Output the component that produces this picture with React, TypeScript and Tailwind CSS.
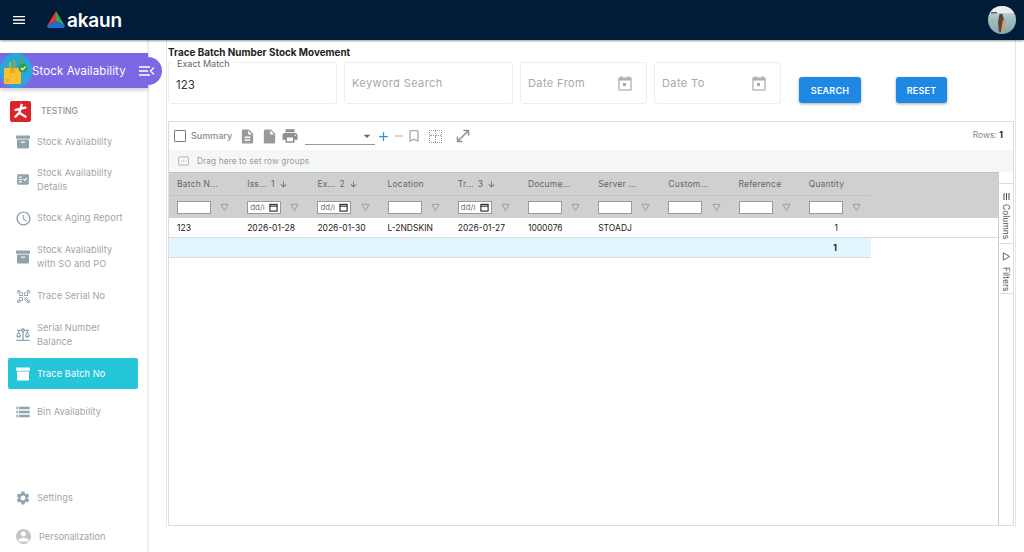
import { ReactNode } from 'react';
import {
  MdMenu,
  MdAccessTime,
  MdFactCheck,
  MdStorage,
  MdSettings,
  MdDescription,
  MdInsertDriveFile,
  MdPrint,
  MdBookmarkBorder,
  MdArrowDropDown,
  MdAdd,
  MdRemove,
  MdArrowDownward,
  MdOutlineQrCodeScanner,
  MdOutlineBalance,
  MdPerson,
} from 'react-icons/md';

const font = "font-['Inter',sans-serif]";

function BoxIcon({ className }: { className?: string }) {
  return (
    <svg viewBox="0 0 14 14" className={className} fill="currentColor">
      <rect x="0" y="0.5" width="14" height="3.2" rx="0.6" />
      <path d="M1 4.6h12v8a1 1 0 0 1-1 1H2a1 1 0 0 1-1-1z" />
      <rect x="5" y="6.6" width="4" height="1.2" fill="white" />
    </svg>
  );
}

function CalendarIcon() {
  return (
    <svg viewBox="0 0 14 15" className="w-[14px] h-[15px]" fill="none" stroke="#aaaaaa">
      <path d="M3.500 0v3M10.500 0v3" strokeWidth="1.200" />
      <rect x="1" y="2" width="12" height="12" strokeWidth="1.200" />
      <path d="M1 3.500h12" strokeWidth="2" />
      <rect x="5" y="7" width="3" height="3" fill="#aaaaaa" stroke="none" />
    </svg>
  );
}

function Logo() {
  return (
    <svg viewBox="0 0 18 18" className="w-[18px] h-[18px]">
      <path d="M9 0 L9 10 L0 15z" fill="#e5392f" />
      <path d="M9 0 L18 15 L9 10z" fill="#3aa655" />
      <path d="M9 10 L18 15 L17 17 L1 17 L0 15z" fill="#1f6fd6" />
    </svg>
  );
}

function ModuleIcon() {
  return (
    <div className="w-[32px] h-[35px] rounded-full bg-[#2aa5de] flex items-center justify-center relative shrink-0">
      <svg viewBox="0 0 32 34" className="w-[32px] h-[34px]">
        <rect x="9" y="8" width="2.5" height="6" fill="#8bc34a" />
        <rect x="13" y="6" width="2.5" height="8" fill="#7cb342" />
        <rect x="19" y="3" width="2.500" height="11" fill="#4caf50" />
        <rect x="4" y="14" width="17" height="16" rx="1" fill="#fbc02d" />
        <rect x="10" y="14" width="5" height="5" fill="#f59e2a" />
        <rect x="6" y="25" width="3" height="2.500" fill="#f59e2a" />
        <circle cx="23" cy="14" r="4.500" fill="#2e9e4f" />
        <path d="M21 14l1.600 1.600 3-3" stroke="white" strokeWidth="1.100" fill="none" />
      </svg>
    </div>
  );
}

function NavItem({ icon, label, lines, active }: { icon: ReactNode; label: string; lines?: string; active?: boolean }) {
  return (
    <div
      className={`flex items-center gap-[7px] pl-[8px] w-[130px] rounded-[2px] ml-[8px] ${
        active ? 'bg-[#26c6da] text-white h-[31px]' : 'text-[#a0a5ab]'
      }`}
    >
      <div className={`w-[14px] h-[14px] shrink-0 flex items-center justify-center ${active ? 'text-white' : 'text-[#90a4ae]'}`}>
        {icon}
      </div>
      <div className="text-[9.2px] leading-[13.5px] tracking-[0.1px]">
        {label}
        {lines && <div>{lines}</div>}
      </div>
    </div>
  );
}

function Sidebar() {
  return (
    <div className="w-[149px] shrink-0 border-r-2 border-[#eeeeee] bg-white h-[512px] pt-[13px] flex flex-col relative">
      <div className="h-[35px] w-[148px] bg-[#7b68e4] flex items-center text-white relative shadow-[0_2px_4px_rgba(0,0,0,0.2)]">
        <ModuleIcon />
        <span className="text-[11.5px] tracking-[0.1px] mt-[2px]">Stock Availability</span>
        <div className="absolute left-[130px] top-[4px] h-[28px] w-[32px] rounded-r-full bg-[#7b68e4] flex items-center justify-center pl-[2px]">
          <svg viewBox="0 0 16 10" className="w-[16px] h-[10px]" stroke="white" strokeWidth="1.300" fill="none">
            <path d="M0 1h11M0 5h9M0 9h11M15 1.500L11.500 5 15 8.500" />
          </svg>
        </div>
      </div>
      <div className="flex items-center h-[22px] mt-[12px] pl-[10px] gap-[10px]">
        <div className="w-[21px] h-[21px] rounded-[2px] bg-[#d9252a] flex items-center justify-center">
          <svg viewBox="0 0 20 20" className="w-[18px] h-[18px]" stroke="white" strokeWidth="2.600" fill="none">
            <path d="M3 9 L16 6 M11 2 L8 12 L3 17 M8 12 L16 17" />
          </svg>
        </div>
        <span className="text-[8.5px] font-medium text-[#8f9499]">TESTING</span>
      </div>
      <div className="mt-[13px] flex flex-col">
        <div className="h-[14px] flex items-center"><NavItem icon={<BoxIcon className="w-[14px] h-[14px]" />} label="Stock Availability" /></div>
        <div className="mt-[17px]"><NavItem icon={<MdFactCheck className="w-[15px] h-[15px]" />} label="Stock Availability" lines="Details" /></div>
        <div className="mt-[18px]"><NavItem icon={<MdAccessTime className="w-[17px] h-[17px] shrink-0" />} label="Stock Aging Report" /></div>
        <div className="mt-[18px]"><NavItem icon={<BoxIcon className="w-[14px] h-[14px]" />} label="Stock Availability" lines="with SO and PO" /></div>
        <div className="mt-[19px]"><NavItem icon={<MdOutlineQrCodeScanner className="w-[15px] h-[15px] shrink-0" />} label="Trace Serial No" /></div>
        <div className="mt-[18px]"><NavItem icon={<MdOutlineBalance className="w-[16px] h-[16px] shrink-0" />} label="Serial Number" lines="Balance" /></div>
        <div className="mt-[10px]"><NavItem active icon={<BoxIcon className="w-[14px] h-[14px]" />} label="Trace Batch No" /></div>
        <div className="mt-[16px]"><NavItem icon={<MdStorage className="w-[16px] h-[16px] shrink-0" />} label="Bin Availability" /></div>
      </div>
      <div className="mt-auto mb-[8px] flex flex-col gap-[24px]">
        <NavItem icon={<MdSettings className="w-[16px] h-[16px] shrink-0" />} label="Settings" />
        <div className="flex items-center gap-[8px] pl-[16px]">
          <div className="w-[15px] h-[15px] rounded-full bg-[#c4c4c4] flex items-end justify-center overflow-hidden">
            <MdPerson className="w-[15px] h-[15px] text-white" />
          </div>
          <span className="text-[9.2px] text-[#a0a5ab]">Personalization</span>
        </div>
      </div>
    </div>
  );
}

function Field({ width, label, value, placeholder, date }: { width: string; label?: string; value?: string; placeholder?: string; date?: boolean }) {
  return (
    <div className={`${width} h-[42px] border border-[#eeeeee] rounded-[3px] relative flex items-center justify-between pl-[8px] pr-[14px]`}>
      {label && <span className="absolute left-[4px] -top-[5px] bg-white px-[4px] text-[9px] leading-[11px] text-[#666]">{label}</span>}
      {value && <span className="text-[11.5px] text-[#333] mt-[6px] -ml-[1px]">{value}</span>}
      {placeholder && <span className="text-[11px] text-[#a8a8a8] tracking-[0.4px] -ml-[1px]">{placeholder}</span>}
      {date && <CalendarIcon />}
    </div>
  );
}

function FilterIcon() {
  return (
    <svg viewBox="0 0 10 10" className="w-[9px] h-[9px] shrink-0" fill="none" stroke="#8a8a8a" strokeWidth="0.8">
      <path d="M1 1.500h8L5 8.500z" />
    </svg>
  );
}

const cols = [
  { title: 'Batch N...', value: '123' },
  { title: 'Iss...', sort: '1', value: '2026-01-28', date: true },
  { title: 'Ex...', sort: '2', value: '2026-01-30', date: true },
  { title: 'Location', value: 'L-2NDSKIN' },
  { title: 'Tr...', sort: '3', value: '2026-01-27', date: true },
  { title: 'Docume...', value: '1000076' },
  { title: 'Server ...', value: 'STOADJ' },
  { title: 'Custom...', value: '' },
  { title: 'Reference', value: '' },
  { title: 'Quantity', value: '1', right: true },
];

function Grid() {
  return (
    <div className="w-[846px] h-[405px] border border-[#dddddd] flex flex-col font-['Inter',sans-serif]">
      <div className="h-[28px] flex items-center pl-[5px] pr-[10px] text-[#8a8a8a] shrink-0">
        <div className="w-[12px] h-[12px] border-[1.5px] border-[#777] rounded-[1px]" />
        <span className="ml-[5px] text-[9px] font-medium">Summary</span>
        <MdDescription className="ml-[7px] w-[17px] h-[17px] text-[#9a9a9a]" />
        <MdInsertDriveFile className="ml-[5px] w-[17px] h-[17px] text-[#9a9a9a]" />
        <MdPrint className="ml-[3px] w-[18px] h-[18px] text-[#8f8f8f]" />
        <div className="ml-[6px] w-[70px] h-[17px] border-b border-[#999] flex justify-end items-center">
          <MdArrowDropDown className="w-[16px] h-[16px] text-[#666]" />
        </div>
        <MdAdd className="ml-[1px] w-[15px] h-[15px] text-[#2f8fe0]" />
        <MdRemove className="ml-[1px] w-[14px] h-[14px] text-[#bbbbbb]" />
        <MdBookmarkBorder className="w-[16px] h-[16px] text-[#aaaaaa]" />
        <div className="ml-[7px] w-[13px] h-[13px] border border-dotted border-[#999] grid grid-cols-2 grid-rows-2">
          <div className="border-r border-b border-dotted border-[#999]" />
          <div className="border-b border-dotted border-[#999]" />
          <div className="border-r border-dotted border-[#999]" />
          <div />
        </div>
        <svg viewBox="0 0 14 14" className="ml-[14px] w-[14px] h-[14px]" stroke="#8f8f8f" strokeWidth="1.500" fill="none">
          <path d="M2 12L12 2M7.500 1.500h5v5M1.500 7.500v5h5" />
        </svg>
        <span className="ml-auto text-[8.5px] text-[#8a8a8a] -mt-[2px]">
          Rows: <b className="text-[#222]">1</b>
        </span>
      </div>
      <div className="h-[22px] bg-[#f5f7f7] flex items-center pl-[9px] gap-[8px] text-[8.3px] tracking-[0.1px] text-[#9a9a9a] shrink-0">
        <svg viewBox="0 0 12 10" className="w-[11px] h-[10px]" stroke="#999" strokeWidth="0.8" fill="none">
          <rect x="0.500" y="0.500" width="11" height="9" rx="1.500" />
          <path d="M3 5h1.500M5.500 5h1M8 5h1" />
        </svg>
        Drag here to set row groups
      </div>
      <div className="flex flex-1 min-h-0">
        <div className="flex-1 min-w-0 flex flex-col">
          <div className="bg-[#d0d0d0] h-[46px] shrink-0 flex border-t border-[#bdc3c7]">
            {cols.map((c) => (
              <div key={c.title} className="w-[70.2px] shrink-0 flex flex-col">
                <div className="h-[23px] flex items-center pl-[8px] pt-[1px] text-[8.5px] text-[#666] gap-[4px] border-b border-[#c4c4c4] tracking-[0.2px]">
                  {c.title}
                  {c.sort && <span>{c.sort}</span>}
                  {c.sort && <MdArrowDownward className="w-[9px] h-[9px]" />}
                </div>
                <div className="h-[23px] flex items-center pl-[8px] pr-[10px] pt-[1px] justify-between">
                  <div className="w-[34px] h-[13px] bg-white border border-[#9a9a9a] flex items-center justify-between px-[2px] text-[8px] text-[#777] overflow-hidden">
                    {c.date && <span className="whitespace-nowrap">dd/ı</span>}
                    {c.date && (
                      <svg viewBox="0 0 10 10" className="w-[9px] h-[9px] shrink-0" stroke="#222" strokeWidth="1.200" fill="none">
                        <rect x="1" y="1.500" width="8" height="7.500" />
                        <path d="M1 3.500h8" />
                      </svg>
                    )}
                  </div>
                  <FilterIcon />
                </div>
              </div>
            ))}
          </div>
          <div className="h-[20px] shrink-0 flex border-b border-[#d9dcde] bg-white pt-[1px]">
            {cols.map((c) => (
              <div key={c.title} className={`w-[70.2px] shrink-0 flex items-center text-[8.5px] text-[#222] ${c.right ? 'justify-end pr-[33px]' : 'pl-[8px]'}`}>
                {c.value}
              </div>
            ))}
          </div>
          <div className="h-[20px] w-[702px] shrink-0 bg-[#e1f5fe] border-b border-[#d9dcde] flex items-center justify-end pr-[34px] pt-[1px] text-[8.5px] font-bold text-[#222]">
            1
          </div>
        </div>
        <div className="w-[15px] shrink-0 border-l border-[#cccccc] bg-white flex flex-col text-[#555]">
          <div className="h-[11px]" />
          <div className="h-[61px] border-t border-b border-[#dddddd] flex flex-col items-center pt-[9px]">
            <svg viewBox="0 0 7 7" className="w-[7px] h-[7px]" stroke="#333" strokeWidth="0.9">
              <path d="M1 0v7M3.500 0v7M6 0v7" />
            </svg>
            <span className="[writing-mode:vertical-lr] text-[8.5px] leading-none whitespace-nowrap mt-[4px]">Columns</span>
          </div>
          <div className="h-[50px] border-b border-[#dddddd] flex flex-col items-center pt-[8px]">
            <svg viewBox="0 0 10 10" className="w-[9px] h-[9px] -rotate-90" fill="none" stroke="#555" strokeWidth="1">
              <path d="M1 1.500h8L5 8.500z" />
            </svg>
            <span className="[writing-mode:vertical-lr] text-[8.5px] leading-none mt-[6px]">Filters</span>
          </div>
        </div>
      </div>
    </div>
  );
}

export default function App() {
  return (
    <div className={`w-[1024px] h-[552px] overflow-hidden bg-white flex flex-col ${font}`}>
      <div className="h-[40px] shrink-0 bg-[#011c38] flex items-center pl-[11px] pr-[8px] shadow-[0_1px_2px_rgba(0,0,0,0.4)] relative z-10">
        <MdMenu className="w-[16px] h-[16px] text-white" />
        <div className="ml-[20px] flex items-center gap-[2px]">
          <Logo />
          <span className="text-white text-[19px] font-semibold tracking-[-0.2px] leading-none">akaun</span>
        </div>
        <div className="ml-auto w-[28px] h-[28px] rounded-full overflow-hidden bg-gradient-to-b from-[#d8e4e4] via-[#9fbcbc] to-[#86a8a8]">
          <svg viewBox="0 0 28 28" className="w-[28px] h-[28px]">
            <rect x="0" y="0" width="28" height="7" fill="#e8eeee" />
            <rect x="3" y="6" width="6" height="1.500" fill="#55686a" />
            <path d="M11 10c0-3 4-3 4 0l2 7-1 9h-5l-1-9z" fill="#5a4636" />
            <path d="M15 13l3 4-2 9h-3z" fill="#c9a27c" />
          </svg>
        </div>
      </div>
      <div className="flex flex-1 min-h-0">
        <Sidebar />
        <div className="ml-[17px] w-[850px] h-[487px] border-l border-r border-[#e8e8e8] pl-[1px] pt-[6px]">
          <div className="text-[9.9px] leading-[12px] font-bold text-[#222]">Trace Batch Number Stock Movement</div>
          <div className="flex mt-[4px] h-[59px] items-start">
            <div className="flex gap-[7px]">
              <Field width="w-[169px]" label="Exact Match" value="123" />
              <Field width="w-[169px]" placeholder="Keyword Search" />
              <Field width="w-[127px]" placeholder="Date From" date />
              <Field width="w-[127px]" placeholder="Date To" date />
            </div>
            <button className="ml-[18px] mt-[15px] pt-[1px] w-[62px] h-[26px] bg-[#1e88e5] rounded-[3px] text-white text-[9px] font-semibold shadow-[0_1px_3px_rgba(0,0,0,0.35)] tracking-[0.2px]">
              SEARCH
            </button>
            <button className="ml-[35px] mt-[15px] pt-[1px] w-[51px] h-[26px] bg-[#1e88e5] rounded-[3px] text-white text-[9px] font-semibold shadow-[0_1px_3px_rgba(0,0,0,0.35)] tracking-[0.2px]">
              RESET
            </button>
          </div>
          <Grid />
        </div>
      </div>
    </div>
  );
}
